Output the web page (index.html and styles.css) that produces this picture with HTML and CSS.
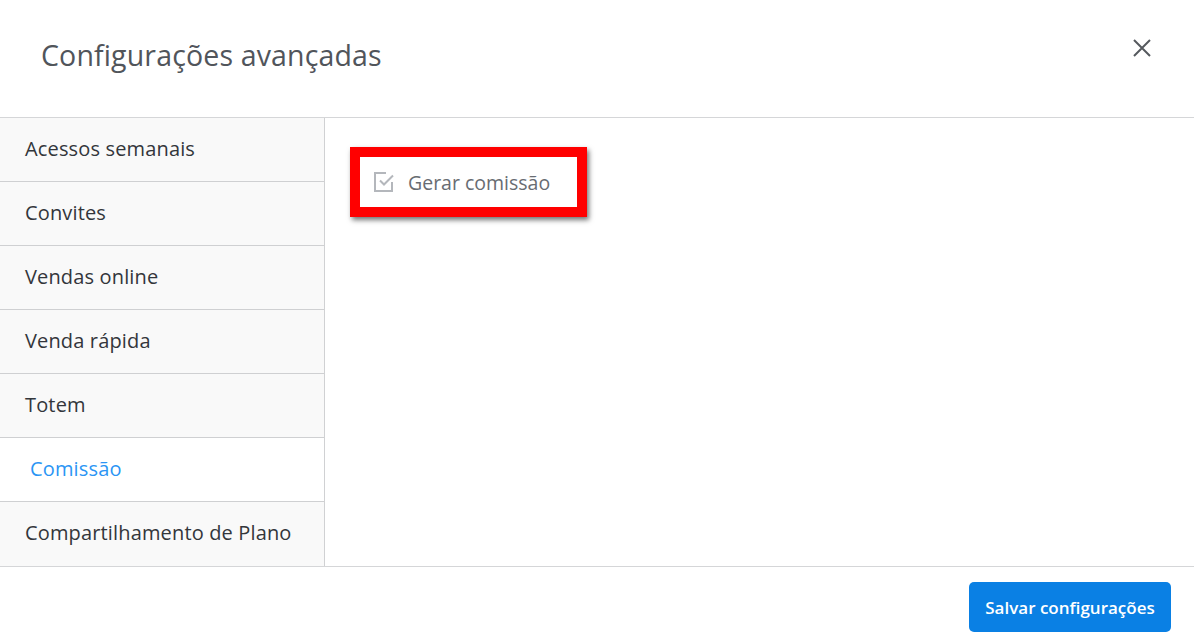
FILE: index.html
```html
<!DOCTYPE html>
<html lang="pt">
<head>
<meta charset="utf-8">
<link rel="stylesheet" href="styles.css">
</head>
<body>
<div class="modal">
  <header class="modal-header">
    <h1 class="title">Configurações avançadas</h1>
    <button class="close" aria-label="Fechar">
      <svg width="20" height="20" viewBox="0 0 20 20"><path d="M2 2 L18 18 M18 2 L2 18" stroke="#55595e" stroke-width="2" fill="none"/></svg>
    </button>
  </header>
  <div class="modal-body">
    <nav class="sidebar">
      <div class="item">Acessos semanais</div>
      <div class="item">Convites</div>
      <div class="item">Vendas online</div>
      <div class="item">Venda rápida</div>
      <div class="item">Totem</div>
      <div class="item active">Comissão</div>
      <div class="item">Compartilhamento de Plano</div>
    </nav>
    <section class="content">
      <div class="highlight">
        <label class="check">
          <svg class="check-icon" width="24" height="24" viewBox="0 0 24 24">
            <path d="M20 12 V21 H3 V3 H14" stroke="#b4b7bc" stroke-width="2" fill="none"/>
            <path d="M8 10.5 L12 14.5 L21 5.5" stroke="#b4b7bc" stroke-width="2" fill="none"/>
          </svg>
          <span>Gerar comissão</span>
        </label>
      </div>
    </section>
  </div>
  <footer class="modal-footer">
    <button class="save">Salvar configurações</button>
  </footer>
</div>
</body>
</html>
```
FILE: styles.css
```css
html, body {
  margin: 0;
  padding: 0;
  background: #fff;
}
body {
  font-family: "Open Sans", "Noto Sans", sans-serif;
  color: #33363b;
}
.modal {
  width: 1194px;
  height: 643px;
  display: flex;
  flex-direction: column;
}
.modal-header {
  border-bottom: 1px solid #d5d6d8;
  display: flex;
  align-items: center;
  justify-content: space-between;
  padding: 0 42px 8px 41px;
  box-sizing: border-box;
  height: 118px;
}
.title {
  margin: 0;
  font-weight: 400;
  font-size: 28.5px;
  color: #51555b;
  letter-spacing: 0.15px;
}
.close {
  border: none;
  background: none;
  padding: 0;
  margin-top: -13px;
  width: 20px;
  height: 20px;
  cursor: pointer;
}
.modal-body {
  display: flex;
  height: 448px;
  border-bottom: 1px solid #d5d6d8;
}
.sidebar {
  width: 324px;
  border-right: 1px solid #d0d1d3;
  background: #f9f9f9;
  display: flex;
  flex-direction: column;
}
.item {
  border-bottom: 1px solid #cfd0d2;
  display: flex;
  align-items: center;
  padding-left: 25px;
  font-size: 20px;
  letter-spacing: 0.15px;
  color: #33363b;
  padding-bottom: 2px;
  height: 61px;
  white-space: nowrap;
}
.item:last-child {
  border-bottom: none;
}
.item.active {
  background: #fff;
  color: #2b95f4;
  padding-left: 30px;
}
.content {
  flex: 1;
  padding: 29px 0 0 25px;
}
.highlight {
  display: inline-flex;
  width: 205px;
  height: 50px;
  border: 10px solid #ff0000;
  box-shadow: 2px 3px 5px rgba(0,0,0,0.55);
  align-items: center;
  padding-left: 12px;
  box-sizing: content-box;
}
.check {
  display: flex;
  align-items: center;
  gap: 12px;
  font-size: 19.5px;
  color: #686c72;
  white-space: nowrap;
}
.modal-footer {
  flex: 1;
  display: flex;
  justify-content: flex-end;
  align-items: flex-start;
  padding: 15px 23px 0 0;
}
.save {
  width: 202px;
  height: 50px;
  border: none;
  border-radius: 5px;
  background: #0a80e4;
  color: #fff;
  font-family: inherit;
  font-size: 17px;
  font-weight: 600;
  cursor: pointer;
}
```
